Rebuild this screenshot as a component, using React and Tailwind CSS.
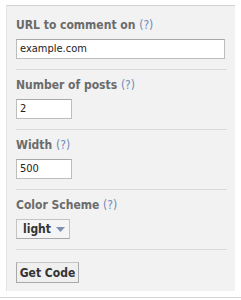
import React from 'react';

function Help() {
  return <span className="font-normal text-[#7189b8]">(?)</span>;
}

function Section({ label, children, last }) {
  return (
    <div className={`${last ? '' : 'border-b border-[#d9d9d9]'} pt-[7px] pb-[10px]`}>
      <div className="h-4 leading-4 text-[12px] font-bold text-[#6b6b6b]">
        {label} <Help />
      </div>
      <div className="mt-[6px]">{children}</div>
    </div>
  );
}

export default function App() {
  return (
    <div className="w-[241px] h-[300px] bg-white font-['DejaVu_Sans_Condensed','DejaVu_Sans',sans-serif] flex flex-col">
      <div className="ml-[6px] mt-[5px] w-[229px] h-[286px] bg-[#f2f2f2] border-t border-[#d2d2d2] border-l border-l-[#e4e4e4] pl-[9px] pr-[8px] text-[11px]">
        <div className="border-b border-[#d9d9d9] pt-[11px] pb-[10px]">
          <div className="h-4 leading-4 text-[12px] font-bold text-[#6b6b6b]">
            URL to comment on <Help />
          </div>
          <div className="mt-[6px] w-[209px] h-5 bg-white border border-[#bdbdbd] border-t-[#a8a8a8] px-[3px] leading-[18px] text-[#222]">
            example.com
          </div>
        </div>
        <Section label="Number of posts">
          <div className="w-[56px] h-5 bg-white border border-[#bdbdbd] border-t-[#a8a8a8] px-[3px] leading-[18px] text-[#222]">2</div>
        </Section>
        <Section label="Width">
          <div className="w-[56px] h-5 bg-white border border-[#bdbdbd] border-t-[#a8a8a8] px-[3px] leading-[18px] text-[#222]">500</div>
        </Section>
        <Section label="Color Scheme">
          <div className="w-[54px] h-5 bg-[#f5f5f5] border border-[#c4c4c4] border-b-[#a9a9a9] flex items-center pl-[6px] gap-[5px] font-bold text-[12px] text-[#333]">
            <span>light</span>
            <svg width="9" height="5" viewBox="0 0 9 5"><path d="M0 0h9L4.5 5z" fill="#7d8fb3" /></svg>
          </div>
        </Section>
        <div className="pt-[12px]">
          <div className="w-[63px] h-[21px] bg-[#efefef] border border-[#a9a9a9] border-t-[#c6c6c6] flex items-center justify-center font-bold text-[#333] text-[12px]">
            Get Code
          </div>
        </div>
      </div>
      <div className="mt-[6px] h-px bg-[#d6d6d6]" />
    </div>
  );
}
